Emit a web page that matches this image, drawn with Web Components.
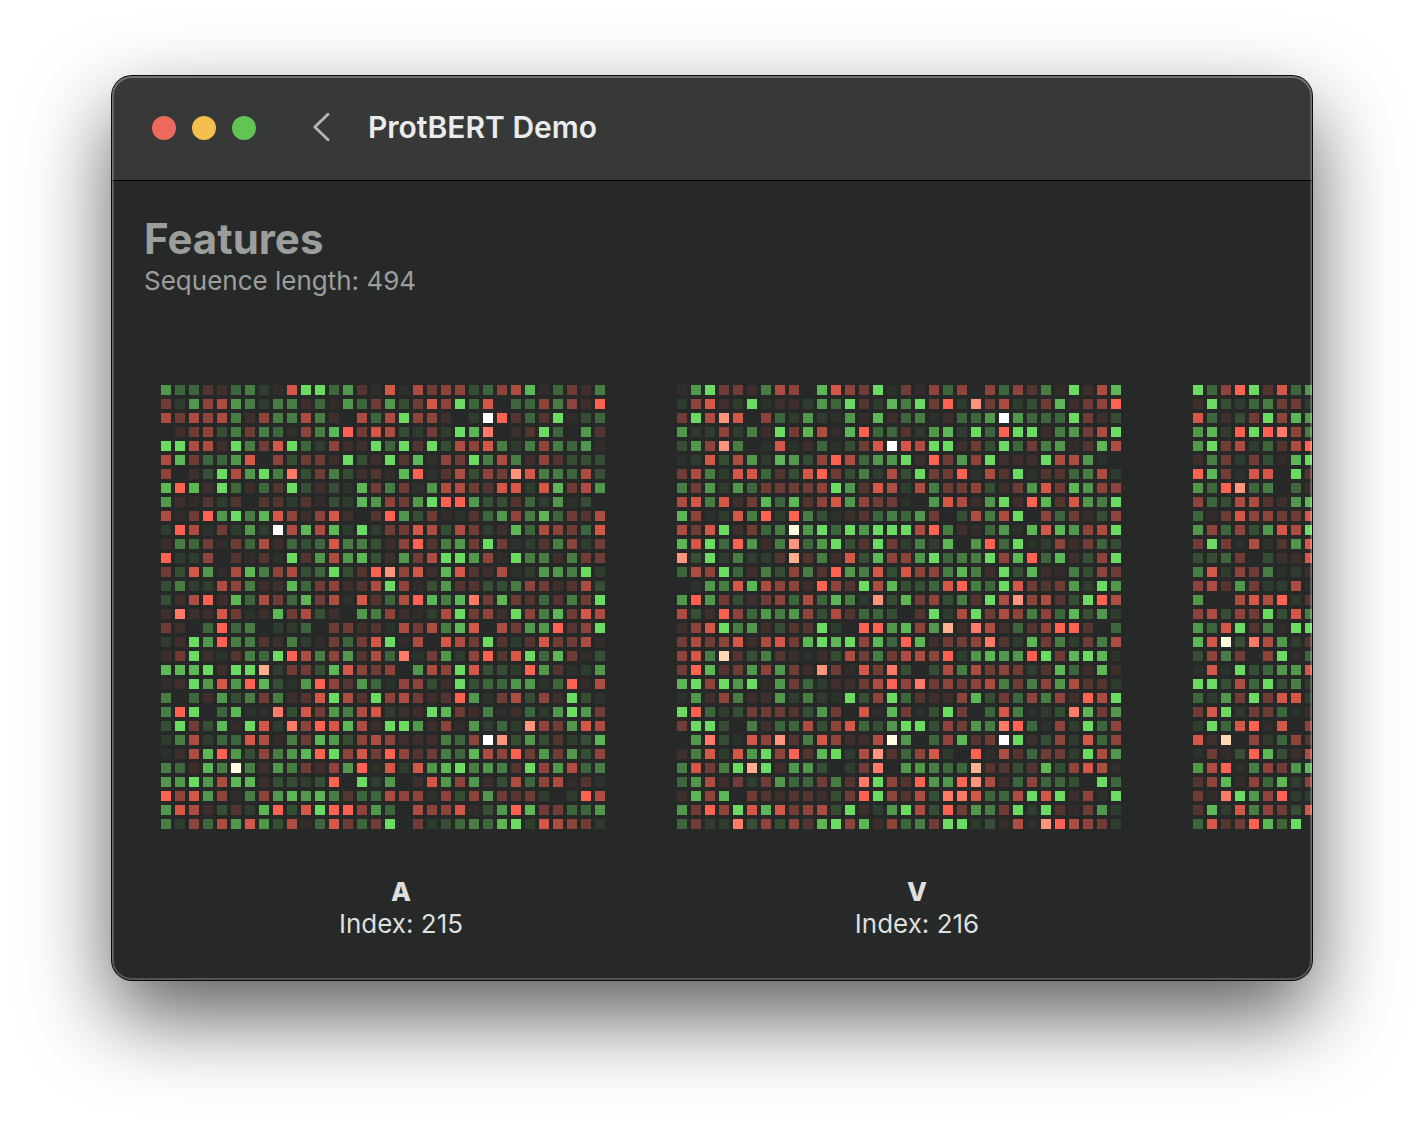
<!DOCTYPE html>
<html lang="en">
<head>
<meta charset="utf-8">
<title>ProtBERT Demo</title>
<style>
  html { background: #fff; }
  body {
    margin: 0;
    padding: 76px 112px 148px;
    font-family: Inter, "Liberation Sans", sans-serif;
    color: #dedfdf;
  }
</style>
</head>
<body>
<app-window>
  <title-bar slot="bar" heading="ProtBERT Demo"></title-bar>
  <feature-header heading="Features">Sequence length: 494</feature-header>
  <feature-strip>
    <feature-card index="215">A</feature-card>
    <feature-card index="216">V</feature-card>
    <feature-card index="217" loading></feature-card>
  </feature-strip>
</app-window>

<script>
// Activation maps. Each character is one cell:
// "." is empty, a-h is green by strength, A-H is red by strength,
// I-L and Y are saturated tints, W is the peak.
const MAPS = {
  215: [
    "fddCBdebAGhhdfCAGaFDEEcdEFgAdDBe",
    "DbfEFfebeeBdAfdDfcDGEhdG.ddEeEBH",
    "FDFEFeBEeeFeB.FdFhEEB.bWHCdChAcd",
    ".BDEceDedAEegHDGFcbDbhgI.BChd.fC",
    "hhFFBheDGhdbEBBhdhChcFEGebeEedfA",
    "FgDddfG.EcDDBhcBhCgAEDheFeBECccc",
    "E.BchFfheIcDecBCAgHaCFcEDJGeedFc",
    "gHgBhdBdChcBcagDeDafFFDCGGbGgDFf",
    "fBACbC.CCbCAcbgfEDfhHHfccCdbfac.",
    "FADHfhegGEBEGB.CHfcDAaCdfEegdDCF",
    "bHFaDbfbWFgFgbhbDDGFcFDbBgdFEDdG",
    "BedDADdFBdcdGeecBEHCefDhDabCeEbD",
    "HbbE.CACahCfFfgcBfDFhhfEAheeBeDD",
    "DcGfAFgeEFcdhcCHJEGBgGCBFabffehb",
    "cebbFEeBBgdDEBCFhEAcfCCcceEDBCFc",
    "cBFHBgdFDdgDFAGCdFHgegIDgDCdCeDh",
    "BIBBGDaBgDFcB.feEBAbFhDEBhEegDGF",
    "DB.dHde.bbd.DDBCaFDFegG.FDffHCEh",
    "bBhfHeeCBebADdDGhAF.GFDhCbCGDDFA",
    "BDhBaCedhHFeEfCFdIaDfbEHCGhdgDAc",
    "ggghBhhKbDDcgGEDE.fFEhGccbHfCabf",
    "ABhfGfHgcafHECfdaEEcBhcddffadHAF",
    "e.dBfceDeBCGhFChEFDBCHfaDFcEBhca",
    "eHh.dgaAIcGDfeFGbBBhgDBeABdbfhfD",
    "chDcgAhGbIEHGgFBhhfBEAfbdbJEDfGF",
    "beFbddGFAeDgfcEFEBBBedEWJcfcCbcg",
    "aBFgHfcEefgHhEGDHECDedgFEHDfDfcE",
    "edBgeYeBfeDBEfHaGbGfghefeChEfFde",
    "ffhfFggBccbcH.hbf.BGfEfBcFdEFACa",
    "HEGfEAeEfgfgeCddFEEaEcEfDCDb.bHF",
    "fGFBcCbgHcGhHHEfd.FEEGAcfHgDDddf",
    "ebEdFfGfcFAdGDdDh.DbcdedghbGFEDb"
  ],
  216: [
    "AfhDDBeFE.gGEDhaDAEdE.EdECeAhBFg",
    "bEGBbhaBBbfdhCbgehDHbJDFbcDgBDEH",
    "DhFJG.EdbfbafAgBdeaBddfWfdddhDBc",
    "fbbEbeBhDgFAgHddCbfgbhdHhhBefDFh",
    "cfEJe.aGaBdacDGWGFhhBDchdDefACgF",
    "abGcFfbgfcEHFdffhBHDfEhBBBhFFfa.",
    "DFebGGdCcGHDcebFchDDHaFChaCCdeFb",
    "eDfbfdDDDDEhfCGFbFeDDEcBDfGDgfEE",
    "FGeGBDgdgCEGfEDDa.fGFBfhBHgCGfeh",
    "gEabGeHbHecaBCdedfD.cFeFh.EdDAcE",
    "FDGhBDdeYfhdhfhhhFHeBAdfagGgfEFh",
    "gGhdHfBeJdfhcChDbebg.fHdhabEBDdc",
    "JchbebbCKCeBGcgEEfhdeehEgHdgBcEh",
    "dFEhdBecEeCHfeGcGEEegeBhcgBAecED",
    ".afeGgFEEBHEChFgccdGHedhGDCDfbhf",
    "fHfDcBDEdFdgebJcgDEceChFJEFCchHF",
    "FcBHEdfefEcFCddc.ChbFhDFEeEdgcfb",
    "BEGhefBcCChb.HHfgEfKBIFBdCEHHC.d",
    "DFDEGBFGDghghEgdHgBDDEICbgDebDeF",
    "EGeLCceCBaBcFDeDFFEHbfgffHhDghga",
    "DHgCDfEfDBJDAGDIc.cFeFDEDbCgdBgB",
    "ghEhfhAfDdbBBDFHEIDEDEFeDeEfFCCb",
    "afBEeBBfbebahcEhdCBBEgcDdEeEBHFh",
    "hHdbcDDDCcfD.GAgDachD.dGeabcIgDf",
    "Dhhc.eBddFcEGdcfhhcEDfeIHdaEbhdE",
    ".fIcaGEJCeGEBBFYf.dEgCDWhBcEbGdE",
    "BeGbGfhEHCghbFJCdEGb.HAFCdDDbhFf",
    "eGDehKhBffc.bDI.ffeddKCCcCgcEGFA",
    "dfFBDbDfddDeCIhECHffHJFBdEddc.hd",
    "BgEg.DCBCCBcDHhECFcIIGddFhGhBEah",
    "fDHEhGgGDEFchBbfhFcHDfeDhbhCADfb",
    "dDbbIcEcECghEgBEdeDhhbcAFaJHFEDb"
  ],
  217: [
    "hdEHhCGdf", "BhcbdeDDb", "GdBcDhEgf", "fgbHhHIEe",
    "fhDFbdCFH", "BeDbDcAgh", "HgDaGG.hC", "fdHJde.dB",
    "EdcFFCBfg", "dADGEEDDG", "fEdEcfGFh", "DhDaFaCfG",
    "ccdD.cBBG", "eGbEDeabB", "EFCfDbbFa", "f..FGFHbC",
    "EFcEDhcGe", "fdGhCeAhh", "gGYcIFfbC", "cEeD.EhAd",
    "aGahcdffG", "hhcFdhceb", "dbfDhDGGb", "DGhbDDdaB",
    "bhdGHAG.E", "GBL.EbdEC", "aDAcHgcBF", "fFHaeEDfg",
    "CEgAEdgbE", "DAIhfEHbb", "CgbGeEDcG", "dGCDHgdh."
  ]
};

const BASE = [39, 41, 40], GREEN = [107, 219, 98], RED = [255, 98, 80];
const STEPS = [0.05, 0.11, 0.21, 0.34, 0.48, 0.62, 0.8, 1];
const TINTS = { I: "#ff7a66", J: "#ff957c", K: "#ffae8e", L: "#ffd8b4", Y: "#fffde0", W: "#ffffff" };

function cellColour(c) {
  if (c === ".") return null;
  if (TINTS[c]) return TINTS[c];
  const green = c >= "a";
  const t = STEPS[c.charCodeAt(0) - (green ? 97 : 65)];
  const full = green ? GREEN : RED;
  return "rgb(" + BASE.map((v, i) => Math.round(v + (full[i] - v) * t)).join(",") + ")";
}

customElements.define("app-window", class extends HTMLElement {
  constructor() {
    super();
    this.attachShadow({ mode: "open" }).innerHTML = `
      <style>
        :host {
          display: block; position: relative; border-radius: 20px; background: #272928;
          box-shadow: 0 0 0 1px #0a0a0a, 0 36px 84px rgba(0,0,0,.64);
        }
        .clip { overflow: hidden; border-radius: inherit; }
        main { display: block; padding: 32px 0 40px; }
        .edge {
          position: absolute; inset: 0; border-radius: inherit; pointer-events: none;
          box-shadow: inset 0 0 0 2px rgba(255,255,255,.2), inset 0 1px 0 1px rgba(255,255,255,.12);
        }
      </style>
      <div class="clip"><slot name="bar"></slot><main><slot></slot></main></div>
      <div class="edge"></div>`;
  }
});

customElements.define("title-bar", class extends HTMLElement {
  connectedCallback() {
    this.attachShadow({ mode: "open" }).innerHTML = `
      <style>
        :host { display: block; }
        header {
          display: flex; align-items: center; height: 104px; padding: 0 40px;
          background: #373938; border-bottom: 1px solid #000;
        }
        button { appearance: none; border: 0; margin: 0; padding: 0; background: none; }
        .lights { display: flex; gap: 16px; }
        .lights button { width: 24px; height: 24px; border-radius: 50%; }
        .close { background: #ed6a5e; }
        .min { background: #f5bf4f; }
        .max { background: #61c554; }
        .back { display: flex; margin: 0 36px 0 56px; }
        h1 { margin: 0; padding-bottom: 2px; font-size: 30px; line-height: 40px; font-weight: 600; color: #ebebeb; white-space: nowrap; }
      </style>
      <header>
        <div class="lights">
          <button class="close" aria-label="Close"></button>
          <button class="min" aria-label="Minimize"></button>
          <button class="max" aria-label="Zoom"></button>
        </div>
        <button class="back" aria-label="Back">
          <svg width="20" height="32" viewBox="0 0 20 32" fill="none" stroke="#b3b5b4" stroke-width="2.9" stroke-linecap="round" stroke-linejoin="round"><path d="M16 2.3 L2.8 15 L16 27.7"/></svg>
        </button>
        <h1>${this.getAttribute("heading")}</h1>
      </header>`;
  }
});

customElements.define("feature-header", class extends HTMLElement {
  connectedCallback() {
    this.attachShadow({ mode: "open" }).innerHTML = `
      <style>
        :host { display: block; padding: 0 32px; color: #9c9e9d; }
        h2 { margin: 0; font-size: 42px; line-height: 52px; font-weight: 700; }
        p { margin: 0; font-size: 26px; line-height: 32px; }
      </style>
      <h2>${this.getAttribute("heading")}</h2>
      <p><slot></slot></p>`;
  }
});

customElements.define("feature-strip", class extends HTMLElement {
  constructor() {
    super();
    this.attachShadow({ mode: "open" }).innerHTML = `
      <style>
        :host { display: flex; gap: 36px; padding: 88px 0 0 49px; overflow-x: auto; scrollbar-width: none; }
      </style>
      <slot></slot>`;
  }
});

customElements.define("feature-card", class extends HTMLElement {
  connectedCallback() {
    const index = this.getAttribute("index");
    let cells = "";
    MAPS[index].forEach((row, y) => {
      [...row].forEach((c, x) => {
        const fill = cellColour(c);
        if (fill) cells += `<rect x="${x * 14}" y="${y * 14}" width="10" height="10" fill="${fill}"/>`;
      });
    });
    // A card that is still loading has no caption yet.
    const caption = this.hasAttribute("loading")
      ? ""
      : `<figcaption><strong><slot></slot></strong>Index: ${index}</figcaption>`;
    this.attachShadow({ mode: "open" }).innerHTML = `
      <style>
        :host { display: block; flex: none; width: 480px; }
        figure { margin: 0; display: flex; flex-direction: column; gap: 43px; }
        svg { display: block; }
        figcaption { text-align: center; font-size: 26px; line-height: 32px; }
        strong { display: block; font-weight: 800; }
      </style>
      <figure>
        <svg width="448" height="448" viewBox="0 0 448 448" role="img" aria-label="Feature map ${index}" shape-rendering="crispEdges">${cells}</svg>
        ${caption}
      </figure>`;
  }
});
</script>
</body>
</html>
